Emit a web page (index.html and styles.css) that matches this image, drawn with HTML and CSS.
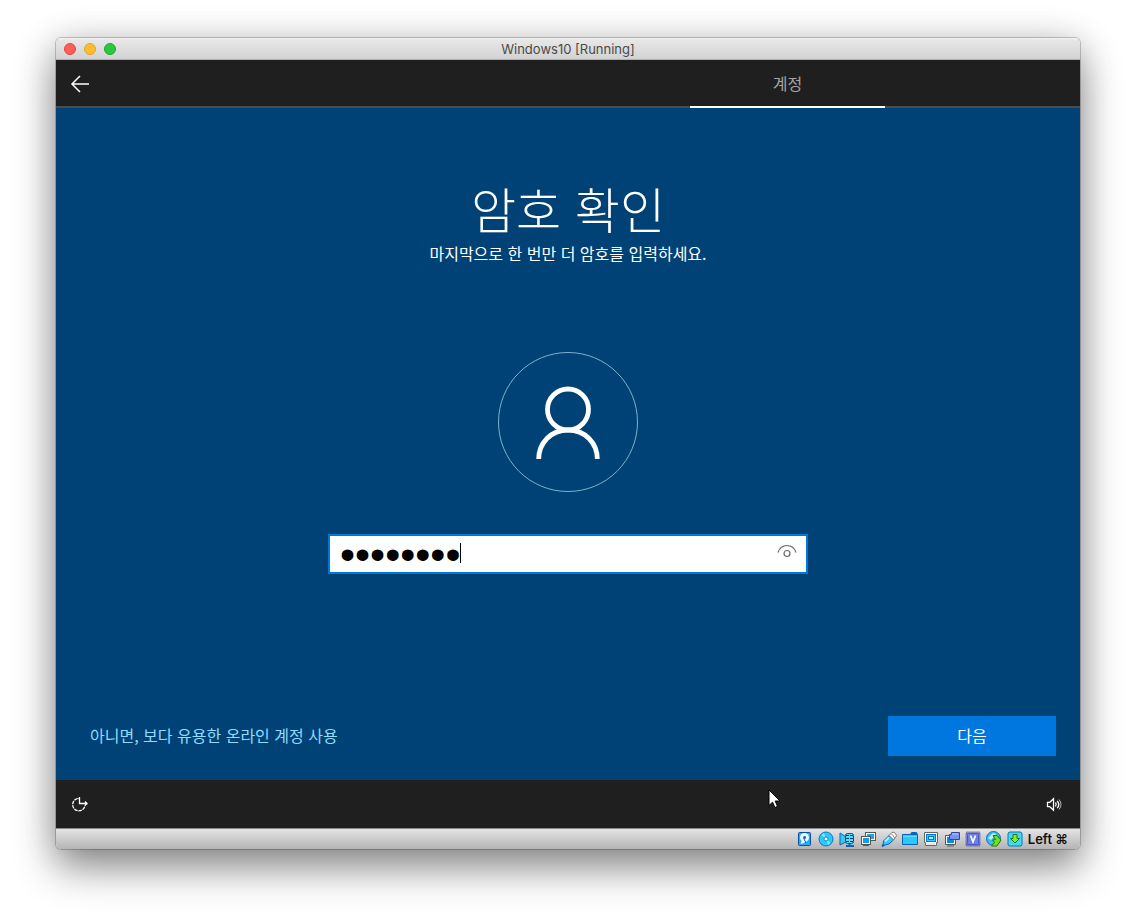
FILE: index.html
```html
<!DOCTYPE html>
<html lang="ko">
<head>
<meta charset="utf-8">
<title>Windows10 [Running]</title>
<link rel="stylesheet" href="styles.css">
</head>
<body>
<div class="window">
  <header class="titlebar">
    <div class="lights">
      <button class="light close" aria-label="Close"></button>
      <button class="light minimize" aria-label="Minimize"></button>
      <button class="light zoom" aria-label="Zoom"></button>
    </div>
    <span class="title">Windows10 [Running]</span>
  </header>

  <nav class="topbar">
    <button class="icon-button back" aria-label="뒤로">
      <svg width="20" height="18" viewBox="0 0 20 18" fill="none" stroke="#fff" stroke-width="1.5"><path d="M19 9H2M10 1L2 9l8 8"/></svg>
    </button>
    <span class="tab">계정</span>
  </nav>

  <main class="screen">
    <h1 class="heading">암호 확인</h1>
    <p class="subtitle">마지막으로 한 번만 더 암호를 입력하세요.</p>
    <svg class="avatar" width="140" height="140" viewBox="0 0 140 140" fill="none">
      <circle cx="70" cy="70" r="69.5" stroke="#7fb2cb"/>
      <circle cx="70" cy="57.500" r="20.500" stroke="#fff" stroke-width="4.800"/>
      <path d="M40.700 107C40.700 91 53 78 70 78s29.300 13 29.300 29" stroke="#fff" stroke-width="4.800"/>
    </svg>
    <div class="field">
      <input class="password" type="password" value="password" aria-label="암호 확인">
      <span class="caret"></span>
      <button class="reveal" aria-label="암호 표시">
        <svg width="20" height="14" viewBox="0 0 20 14" fill="none" stroke="#666" stroke-width="1.200"><path d="M1 8.500C2.500 4 5.500 1.500 10 1.500S17.500 4 19 8.500"/><circle cx="10" cy="9.500" r="3"/></svg>
      </button>
    </div>
    <div class="actions">
      <a class="link" href="#">아니면, 보다 유용한 온라인 계정 사용</a>
      <button class="next">다음</button>
    </div>
  </main>

  <div class="bottombar">
    <button class="icon-button" aria-label="접근성">
      <svg width="18" height="18" viewBox="0 0 18 18" fill="none" stroke="#fff" stroke-width="1.300"><path d="M6.500 3.600A6.200 6.200 0 1 0 14 10.500" stroke-dasharray="3.500 .8"/><path d="M8.500 2v6.500H16.500M14 6.500l2 2-2 2M6.500 3.500l2-1"/></svg>
    </button>
    <button class="icon-button" aria-label="볼륨">
      <svg width="18" height="16" viewBox="0 0 18 16" fill="none" stroke="#fff" stroke-width="1.300"><path d="M1.500 6.300h2.300L7.500 2.800v11.400L3.800 10.700H1.500zM9.500 6.500q1.500 2 0 4M11.200 4.800q3 3.700 0 7.400"/><path d="M13 3.500q4 5 0 10" stroke="#bbb" stroke-width="1"/></svg>
    </button>
  </div>

  <footer class="statusbar">
    <svg class="device" viewBox="0 0 16 16"><rect x="1.500" y="1.500" width="12" height="13" rx="1" fill="#22aef5" stroke="#0750a0"/><circle cx="7.500" cy="6.500" r="4.500" fill="#e9fbff"/><path d="M4 12l4-2" stroke="#fff" stroke-width="2"/><circle cx="7.500" cy="6.500" r="1.500" fill="#0864bb"/><path d="M7 8l2 4" stroke="#0864bb"/></svg>
    <svg class="device" viewBox="0 0 16 16"><circle cx="8" cy="8" r="7" fill="#2cc8fb" stroke="#0876c8"/><path d="M8 8L3.500 4 6 2zM8 8l4.500 4-2.500 2z" fill="#7fe6ff"/><circle cx="8" cy="8" r="2" fill="#fff" stroke="#078bd1"/></svg>
    <svg class="device" viewBox="0 0 16 16"><path d="M1 2l6 4v5l-6 3z" fill="#33c8f7" stroke="#0864bb"/><rect x="6.500" y="2.500" width="8" height="10" rx="2" fill="#56dafa" stroke="#075290"/><path d="M7 4.500h3m1 0h3M7 7.500h3m1 0h3M7 10.500h3m1 0h3" stroke="#063b63"/><path d="M7 15h8M10.500 13v2" stroke="#0864bb" stroke-width="2"/></svg>
    <svg class="device" viewBox="0 0 16 16"><rect x="5.500" y="1.500" width="10" height="8" fill="#fff" stroke="#555"/><rect x="7" y="3" width="7" height="5" fill="#16a6ed"/><rect x="1.500" y="5.500" width="9" height="8" fill="#fff" stroke="#555"/><rect x="3" y="7" width="6" height="5" fill="#109cf0"/><path d="M3 14.500h6" stroke="#555"/></svg>
    <svg class="device" viewBox="0 0 16 16"><path d="M2.500 10L8 4.500l4.500 4.500-4.500 4-6 1.500z" fill="#38c7f8" stroke="#0864bb"/><path d="M8 4.500l3-3q2-1 3.500 1t.500 3L12.500 9z" fill="#f8f8f8" stroke="#777"/><path d="M11 3.500l1 1m.5 1l1 1" stroke="#444"/><path d="M4 10.500l4-4" stroke="#a4f0ff" stroke-width="2"/><path d="M1 15.500l2-2" stroke="#0864bb" stroke-width="2"/></svg>
    <svg class="device" viewBox="0 0 16 16"><path d="M.500 13.500v-10h8l1-2h5l1 2v10z" fill="#2ac8fb" stroke="#0864bb"/><path d="M9 3h6" stroke="#0864bb" stroke-width="2"/><path d="M1 5.500h14" stroke="#62ddff"/></svg>
    <svg class="device" viewBox="0 0 16 16"><path d="M1.500 1.500h13v10h-1v3h-11v-3h-1z" fill="#fff" stroke="#666"/><rect x="3.500" y="3.500" width="9" height="7" fill="#35ccfb" stroke="#0878d0"/><rect x="5.500" y="5.500" width="5" height="3" fill="#a4f0ff" stroke="#0878d0"/><path d="M4 13h8" stroke="#ccc"/></svg>
    <svg class="device" viewBox="0 0 16 16"><path d="M1.500 4.500h10v9h-10z" fill="#fff" stroke="#555"/><path d="M3 6h7v6H3z" fill="#078bea"/><path d="M3 15h7" stroke="#555"/><path d="M5.500 3.500h2v-2h8v7h-10z" fill="#7694ed" stroke="#3145a8"/><path d="M8 3h6" stroke="#b6caff"/></svg>
    <svg class="device" viewBox="0 0 16 16"><rect x="1.500" y="1.500" width="13" height="13" fill="none" stroke="#3037a6" stroke-width="2" stroke-dasharray="1 1"/><rect x="2.500" y="2.500" width="11" height="11" rx="1" fill="#6d7fe5" stroke="#4a56c8"/><path d="M5.500 4.500l2.500 6.500 2.500-6.500" fill="none" stroke="#fff" stroke-width="1.700"/></svg>
    <svg class="device" viewBox="0 0 16 16"><circle cx="7.500" cy="7.500" r="7" fill="#39bdf1" stroke="#176daf"/><path d="M2 7l5-5 3 1-5 6z" fill="#b0f5ff"/><path d="M7 4.500h4l4 4.500-4 6H5.500l3-3.500-2-2.500 3-.500z" fill="#70e315" stroke="#207919"/></svg>
    <svg class="device" viewBox="0 0 16 16"><rect x="1" y="1" width="14" height="14" rx="2" fill="#43d8f8" stroke="#0876b8"/><path d="M6 3.500h4v4h2.500L8 12 3.500 7.500H6z" fill="#8bef18" stroke="#237719"/></svg>
    <span class="hostkey">Left ⌘</span>
  </footer>

  <svg class="pointer" width="13" height="20" viewBox="0 0 13 20"><path d="M1 1v15.500l3.500-3.300 2.500 5.300 2.500-1.200L7.200 12H12z" fill="#fff" stroke="#000"/></svg>
</div>
</body>
</html>
```
FILE: styles.css
```css
* { box-sizing: border-box; }

body {
  display: flex;
  min-height: 100vh;
  margin: 0;
  padding: 38px 56px 74px;
  background: #fff;
  font-family: "Noto Sans CJK KR", sans-serif;
  font-size: 16px;
}

button {
  margin: 0;
  padding: 0;
  border: 0;
  background: none;
  font: inherit;
}

svg { display: block; }

.window {
  position: relative;
  display: flex;
  flex: 1;
  flex-direction: column;
  border-radius: 5px;
  box-shadow: 0 0 0 1px rgba(0, 0, 0, 0.2), 0 18px 40px rgba(0, 0, 0, 0.46), 0 0 36px rgba(0, 0, 0, 0.12);
}

.titlebar {
  display: grid;
  grid-template-columns: 1fr auto 1fr;
  align-items: center;
  height: 22px;
  padding: 0 8px;
  border-bottom: 1px solid #afafaf;
  border-radius: 5px 5px 0 0;
  background: linear-gradient(#f4f4f4, #e7e7e7 2px, #d2d2d2);
}

.lights { display: flex; gap: 8px; }

.light {
  width: 12px;
  height: 12px;
  border-radius: 50%;
}

.close { border: 1px solid #e2463f; background: #ff5f57; }
.minimize { border: 1px solid #e1a32d; background: #ffbd2e; }
.zoom { border: 1px solid #1aab2c; background: #28c940; }

.title {
  color: #4a4a4a;
  font-family: Inter, sans-serif;
  font-size: 13px;
  line-height: 20px;
}

.topbar {
  display: grid;
  grid-template-columns: 634px 195px 1fr;
  height: 48px;
  border-bottom: 2px solid #4c4c4c;
  background: #1f1f1f;
}

.icon-button {
  display: grid;
  place-items: center;
  width: 48px;
  height: 48px;
}

.tab {
  height: 48px;
  border-bottom: 2px solid #fff;
  color: #a5a5a5;
  line-height: 46px;
  text-align: center;
}

.screen {
  display: flex;
  flex: 1;
  flex-direction: column;
  align-items: center;
  padding: 66px 24px 24px;
  background: #004275;
  color: #fff;
}

.heading {
  margin: 0;
  font-family: "Noto Sans CJK KR Light", "Noto Sans CJK KR", sans-serif;
  font-size: 49px;
  font-weight: 300;
  line-height: 68px;
}

.subtitle {
  margin: 0 0 88px;
  line-height: 22px;
}

.field {
  position: relative;
  width: 480px;
  max-width: 100%;
  margin-top: 42px;
}

.password {
  display: block;
  width: 100%;
  height: 40px;
  padding: 0 48px 0 10px;
  border: 2px solid #0078d7;
  outline: 0;
  border-radius: 0;
  background: #fff;
  color: #000;
  font-family: "Liberation Sans", sans-serif;
  font-size: 43px;
  line-height: 36px;
}

.caret {
  position: absolute;
  top: 9px;
  left: 132px;
  width: 1px;
  height: 20px;
  background: #000;
}

.reveal {
  position: absolute;
  top: 10px;
  right: 11px;
}

.actions {
  display: flex;
  align-items: center;
  justify-content: space-between;
  width: 100%;
  margin-top: auto;
  padding-left: 10px;
}

.link {
  padding-bottom: 2px;
  color: #8fdcff;
  text-decoration: none;
}

.next {
  width: 168px;
  height: 40px;
  padding-bottom: 2px;
  background: #0077de;
  color: #fff;
}

.bottombar {
  display: flex;
  justify-content: space-between;
  height: 48px;
  background: #1f1f1f;
}

.bottombar .icon-button:last-child { width: 50px; }

.statusbar {
  display: flex;
  align-items: center;
  justify-content: flex-end;
  gap: 5px;
  height: 21px;
  padding: 0 12px;
  border-top: 1px solid #888;
  border-radius: 0 0 5px 5px;
  background: linear-gradient(#e4e4e4, #b4b4b4);
}

.device { width: 16px; height: 16px; }

.hostkey {
  color: #111;
  font-family: Inter, "DejaVu Sans", sans-serif;
  font-size: 13px;
  font-weight: 600;
  line-height: 20px;
}

.pointer {
  position: absolute;
  top: 751px;
  left: 712px;
}
```
